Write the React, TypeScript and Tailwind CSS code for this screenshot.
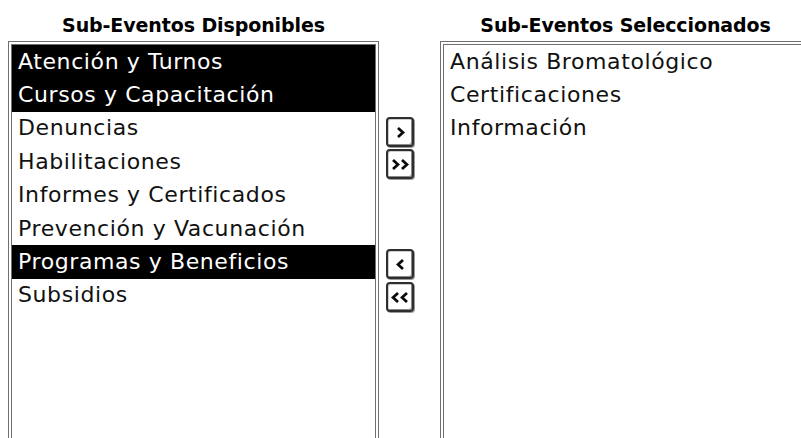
import { useState } from 'react';

type Item = { id: string; label: string };

const AVAILABLE: Item[] = [
  { id: 'atencion', label: 'Atención y Turnos' },
  { id: 'cursos', label: 'Cursos y Capacitación' },
  { id: 'denuncias', label: 'Denuncias' },
  { id: 'habilitaciones', label: 'Habilitaciones' },
  { id: 'informes', label: 'Informes y Certificados' },
  { id: 'prevencion', label: 'Prevención y Vacunación' },
  { id: 'programas', label: 'Programas y Beneficios' },
  { id: 'subsidios', label: 'Subsidios' },
];

const SELECTED: Item[] = [
  { id: 'analisis', label: 'Análisis Bromatológico' },
  { id: 'certificaciones', label: 'Certificaciones' },
  { id: 'informacion', label: 'Información' },
];

const FONT = "font-['DejaVu_Sans',sans-serif]";

function Chevron({ dir }: { dir: 'left' | 'right' }) {
  return (
    <svg width="9" height="13" viewBox="0 0 9 13" fill="none">
      <path
        d={dir === 'right' ? 'M2 2 L7 6.5 L2 11' : 'M7 2 L2 6.5 L7 11'}
        stroke="#0a0a0a"
        strokeWidth="2.8"
      />
    </svg>
  );
}

function MoveButton({ dir, double }: { dir: 'left' | 'right'; double?: boolean }) {
  return (
    <button className="w-[28px] h-[30px] ml-[7px] flex items-center justify-center gap-0 bg-white border-2 border-[#2e2e2e] rounded-[4px] shadow-[inset_-1px_-1px_0_#8a8a8a,inset_1px_1px_0_#cfcfcf,1px_1px_0_#9a9a9a]">
      <Chevron dir={dir} />
      {double && <Chevron dir={dir} />}
    </button>
  );
}

function ListBox({
  title,
  items,
  highlighted,
  onToggle,
}: {
  title: string;
  items: Item[];
  highlighted: string[];
  onToggle: (id: string) => void;
}) {
  return (
    <div className="w-[371px] shrink-0 flex flex-col">
      <div className={`h-[41px] flex items-center justify-center pt-[9px] ${FONT} font-bold text-[19px] text-black tracking-[-0.1px]`}>
        {title}
      </div>
      <div className="flex-1 border-[4px] border-double border-[#6f6f6f] border-b-0 bg-white">
        {items.map((item) => {
          const on = highlighted.includes(item.id);
          return (
            <div
              key={item.id}
              onClick={() => onToggle(item.id)}
              className={`h-[33.4px] flex items-center pl-[6px] ${FONT} text-[22px] tracking-[0.6px] leading-none ${
                on ? 'bg-black text-white' : 'text-[#111]'
              }`}
            >
              {item.label}
            </div>
          );
        })}
      </div>
    </div>
  );
}

export default function App() {
  const [picked, setPicked] = useState<string[]>(['atencion', 'cursos', 'programas']);
  const [pickedRight, setPickedRight] = useState<string[]>([]);

  const toggle = (list: string[], set: (v: string[]) => void) => (id: string) =>
    set(list.includes(id) ? list.filter((x) => x !== id) : [...list, id]);

  return (
    <div className="w-[801px] h-[438px] overflow-hidden bg-white flex pl-[8px]">
      <ListBox
        title="Sub-Eventos Disponibles"
        items={AVAILABLE}
        highlighted={picked}
        onToggle={toggle(picked, setPicked)}
      />

      <div className="w-[61px] shrink-0 flex flex-col pt-[117px]">
        <div className="flex flex-col gap-[2px]">
          <MoveButton dir="right" />
          <MoveButton dir="right" double />
        </div>
        <div className="flex flex-col gap-[3px] mt-[70px]">
          <MoveButton dir="left" />
          <MoveButton dir="left" double />
        </div>
      </div>

      <ListBox
        title="Sub-Eventos Seleccionados"
        items={SELECTED}
        highlighted={pickedRight}
        onToggle={toggle(pickedRight, setPickedRight)}
      />
    </div>
  );
}
